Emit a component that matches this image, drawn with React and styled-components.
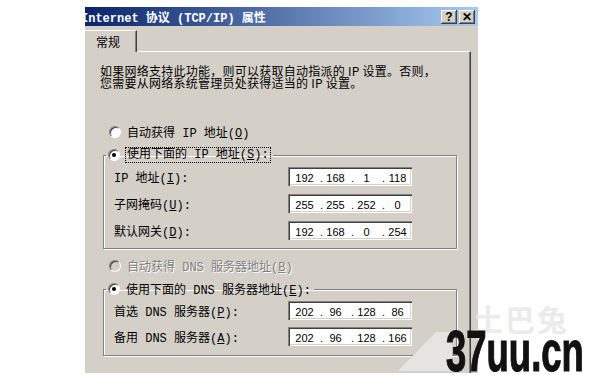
import styled, { createGlobalStyle } from "styled-components";

const GlobalStyle = createGlobalStyle`
  html, body {
    margin: 0;
    background: #fff;
  }
`;

const Stage = styled.div`
  position: relative;
  width: 595px;
  height: 375px;
  overflow: hidden;
  box-sizing: border-box;
  padding: 7px 0 0 85px;
  background: #fff;
`;

const Window = styled.div`
  width: 393px;
  height: 366px;
  display: flex;
  flex-direction: column;
  background: #d4d0c8;
  font-family: "Liberation Mono", "Noto Sans CJK SC", monospace;
  font-size: 12px;
  color: #000;
`;

const TitleBar = styled.div`
  height: 19px;
  display: flex;
  align-items: center;
  padding-right: 3px;
  background: linear-gradient(to right, #0a246a, #a6caf0);
  overflow: hidden;
`;

const Title = styled.div`
  flex: 1;
  min-width: 0;
  margin-left: -4px;
  color: #fff;
  font-weight: bold;
  font-size: 12px;
  white-space: nowrap;
`;

const CapButtons = styled.div`
  display: flex;
  gap: 2px;
`;

const CapButton = styled.div`
  width: 16px;
  height: 14px;
  display: flex;
  align-items: center;
  justify-content: center;
  background: #d4d0c8;
  box-shadow: inset -1px -1px #404040, inset 1px 1px #fff,
    inset -2px -2px #808080;
  font-family: "Liberation Sans", sans-serif;
  font-weight: bold;
  font-size: 12px;
  line-height: 1;
`;

const TabStrip = styled.div`
  height: 26px;
  display: flex;
  align-items: flex-end;
  margin-right: 7px;
`;

const Tab = styled.div`
  width: 52px;
  height: 22px;
  box-sizing: border-box;
  padding: 3px 0 0 11px;
  border-top: 1px solid #fff;
  border-right: 1px solid #404040;
  box-shadow: inset -1px 0 #808080;
  font-family: "Noto Sans CJK SC", sans-serif;
  line-height: 16px;
`;

const TabLine = styled.div`
  flex: 1;
  border-bottom: 1px solid #fff;
  border-right: 1px solid #404040;
  height: 0;
`;

const Panel = styled.div`
  flex: 1;
  margin-right: 7px;
  padding: 13px 13px 0 15px;
  border-right: 1px solid #404040;
  box-shadow: inset -1px 0 #808080;
`;

const Intro = styled.p`
  margin: 0 0 35px;
  height: 24px;
  line-height: 12px;
  font-family: "Noto Sans CJK SC", sans-serif;
  letter-spacing: 0.25px;
`;

const RadioRow = styled.div`
  height: 16px;
  display: flex;
  align-items: center;
  gap: 6px;
  padding-left: 9px;
  margin-top: ${(p) => p.$top || 0}px;
  color: ${(p) => (p.$disabled ? "#808080" : "#000")};
  text-shadow: ${(p) => (p.$disabled ? "1px 1px #fff" : "none")};
`;

const RadioCircle = styled.span`
  width: 12px;
  height: 12px;
  flex: none;
  box-sizing: border-box;
  border-radius: 50%;
  border: 1px solid;
  border-color: #808080 #fff #fff #808080;
  background: ${(p) => (p.$disabled ? "#d4d0c8" : "#fff")};
  box-shadow: inset 1px 1px #404040;
  display: flex;
  align-items: center;
  justify-content: center;
`;

const RadioDot = styled.span`
  width: 4px;
  height: 4px;
  border-radius: 50%;
  background: #000;
`;

const FocusLabel = styled.span`
  outline: 1px dotted #000;
  outline-offset: 0;
  padding: 0 1px;
  line-height: 14px;
`;

const Group = styled.fieldset`
  margin: ${(p) => p.$top}px 0 0 3px;
  padding: 0 0 ${(p) => p.$bottom}px 10px;
  border: 1px solid #808080;
  box-shadow: inset 1px 1px #fff, 1px 1px #fff;
  display: flex;
  flex-direction: column;
  gap: ${(p) => p.$gap}px;
`;

const Legend = styled.legend`
  padding: 0 3px 0 2px;
  margin-left: -8px;
  height: 16px;
  display: flex;
  align-items: center;
  gap: 6px;
`;

const FieldRow = styled.div`
  display: flex;
  align-items: center;
  height: 19px;
  &:first-of-type {
    margin-top: ${(p) => p.$first}px;
  }
`;

const FieldLabel = styled.span`
  width: 174px;
  flex: none;
`;

const IpBox = styled.div`
  width: 124px;
  height: 19px;
  box-sizing: border-box;
  padding: 2px 0 0 4px;
  display: flex;
  align-items: center;
  background: #fff;
  box-shadow: inset 1px 1px #808080, inset 2px 2px #404040, inset -1px -1px #fff,
    inset -2px -2px #d4d0c8;
  font-family: "Liberation Sans", sans-serif;
  font-size: 11px;
`;

const Part = styled.span`
  width: 25px;
  text-align: center;
`;

const Dot = styled.span`
  width: 6px;
  text-align: right;
`;

const Watermark = styled.div`
  position: absolute;
  left: 0;
  top: 0;
  width: 595px;
  height: 375px;
  overflow: hidden;
  pointer-events: none;
`;

const Swoosh = styled.svg`
  position: absolute;
  left: 0;
  top: 0;
`;

const FaintMark = styled.div`
  position: absolute;
  left: 473px;
  top: 300px;
  font-family: "Noto Sans CJK SC", sans-serif;
  font-size: 30px;
  line-height: 36px;
  letter-spacing: 2px;
  color: #ebebeb;
  font-weight: bold;
`;

const Logo = styled.div`
  position: absolute;
  left: 446px;
  top: 323px;
  font-family: "Liberation Sans", sans-serif;
  font-weight: bold;
  font-size: 57px;
  line-height: 1;
  color: #111;
  -webkit-text-stroke: 1.2px #111;
  transform: scaleX(0.64);
  transform-origin: left top;
  white-space: nowrap;
`;

function Key({ k }) {
  return (
    <>
      (<u>{k}</u>)
    </>
  );
}

function Radio({ checked, disabled }) {
  return (
    <RadioCircle $disabled={disabled}>{checked && <RadioDot />}</RadioCircle>
  );
}

function IpField({ parts }) {
  return (
    <IpBox>
      {parts.map((p, i) => (
        <span key={i} style={{ display: "contents" }}>
          {i > 0 && <Dot>.</Dot>}
          <Part>{p}</Part>
        </span>
      ))}
    </IpBox>
  );
}

const ipRows = [
  { label: <>IP 地址<Key k="I" />:</>, parts: ["192", "168", "1", "118"] },
  { label: <>子网掩码<Key k="U" />:</>, parts: ["255", "255", "252", "0"] },
  { label: <>默认网关<Key k="D" />:</>, parts: ["192", "168", "0", "254"] },
];

const dnsRows = [
  { label: <>首选 DNS 服务器<Key k="P" />:</>, parts: ["202", "96", "128", "86"] },
  { label: <>备用 DNS 服务器<Key k="A" />:</>, parts: ["202", "96", "128", "166"] },
];

export default function App() {
  return (
    <Stage>
      <GlobalStyle />
      <Window>
        <TitleBar>
          <Title>Internet 协议 (TCP/IP) 属性</Title>
          <CapButtons>
            <CapButton>?</CapButton>
            <CapButton>✕</CapButton>
          </CapButtons>
        </TitleBar>
        <TabStrip>
          <Tab>常规</Tab>
          <TabLine />
        </TabStrip>
        <Panel>
          <Intro>
            如果网络支持此功能，则可以获取自动指派的 IP 设置。否则，
            <br />
            您需要从网络系统管理员处获得适当的 IP 设置。
          </Intro>

          <RadioRow>
            <Radio />
            <span>自动获得 IP 地址<Key k="O" /></span>
          </RadioRow>

          <Group $top={7} $gap={8} $bottom={8}>
            <Legend>
              <Radio checked />
              <FocusLabel>使用下面的 IP 地址<Key k="S" />:</FocusLabel>
            </Legend>
            {ipRows.map((r, i) => (
              <FieldRow key={i} $first={4}>
                <FieldLabel>{r.label}</FieldLabel>
                <IpField parts={r.parts} />
              </FieldRow>
            ))}
          </Group>

          <RadioRow $top={9} $disabled>
            <Radio disabled />
            <span>自动获得 DNS 服务器地址<Key k="B" /></span>
          </RadioRow>

          <Group $top={7} $gap={7} $bottom={9}>
            <Legend>
              <Radio checked />
              <span>使用下面的 DNS 服务器地址<Key k="E" />:</span>
            </Legend>
            {dnsRows.map((r, i) => (
              <FieldRow key={i} $first={4}>
                <FieldLabel>{r.label}</FieldLabel>
                <IpField parts={r.parts} />
              </FieldRow>
            ))}
          </Group>
        </Panel>
      </Window>

      <Watermark>
        <Swoosh width="595" height="375">
          <polygon points="398,371 436,332 452,332 452,371" fill="#e6e4e0" />
        </Swoosh>
        <FaintMark>土巴兔</FaintMark>
        <Logo>37uu.cn</Logo>
      </Watermark>
    </Stage>
  );
}
